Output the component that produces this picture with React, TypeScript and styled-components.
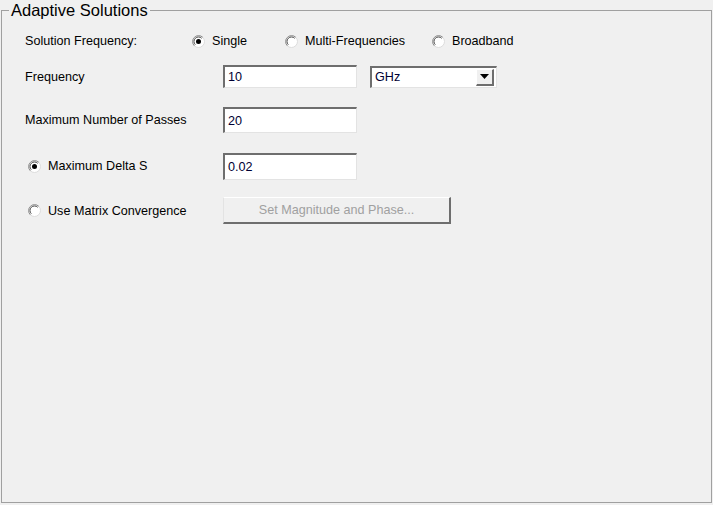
import React from "react";
import styled, { createGlobalStyle } from "styled-components";

const Global = createGlobalStyle`
  html, body { margin: 0; padding: 0; background: #f0f0f0; }
  body { font-family: "Liberation Sans", Arial, sans-serif; font-size: 12.6px; color: #000; }
`;

const Page = styled.div`
  width: 713px;
  height: 505px;
  padding-left: 1px;
  box-sizing: border-box;
`;

const Group = styled.fieldset`
  margin: 0;
  padding: 0;
  width: 711px;
  height: 503px;
  box-sizing: border-box;
  border: 1px solid #a0a0a0;
`;

const Legend = styled.legend`
  margin-left: 7px;
  padding: 0 2px;
  font-size: 16.5px;
  line-height: 20px;
  color: #000;
`;

const Content = styled.div`
  padding: 11px 0 0 23px;
  display: flex;
  flex-direction: column;
`;

const Row = styled.div<{ $top: number; $h: number }>`
  display: flex;
  align-items: center;
  margin-top: ${(p) => p.$top}px;
  height: ${(p) => p.$h}px;
`;

const Label = styled.div<{ $w?: number; $indent?: number }>`
  width: ${(p) => p.$w ?? 198}px;
  padding-left: ${(p) => p.$indent ?? 0}px;
  box-sizing: border-box;
  display: flex;
  align-items: center;
  gap: 7px;
  white-space: nowrap;
`;

const Option = styled.label<{ $w: number }>`
  width: ${(p) => p.$w}px;
  display: flex;
  align-items: center;
  gap: 7px;
  white-space: nowrap;
`;

const TextBox = styled.div<{ $w: number; $h: number }>`
  width: ${(p) => p.$w}px;
  height: ${(p) => p.$h}px;
  box-sizing: border-box;
  background: #fff;
  border-style: solid;
  border-width: 2px 1px 1px 2px;
  border-color: #6e6e6e #e3e3e3 #e3e3e3 #6e6e6e;
  padding: 0 3px;
  display: flex;
  align-items: center;
  color: #000033;
`;

const Select = styled(TextBox)`
  margin-left: 13px;
  padding-right: 2px;
  justify-content: space-between;
`;

const DropButton = styled.div`
  width: 18px;
  height: 17px;
  box-sizing: border-box;
  background: #f0f0f0;
  border-style: solid;
  border-width: 1px 2px 2px 1px;
  border-color: #ffffff #6e6e6e #6e6e6e #ffffff;
  display: flex;
  align-items: center;
  justify-content: center;
`;

const Button = styled.div`
  width: 228px;
  height: 27px;
  box-sizing: border-box;
  background: #f0f0f0;
  border-style: solid;
  border-width: 1px 2px 2px 1px;
  border-color: #ffffff #6e6e6e #6e6e6e #e3e3e3;
  display: flex;
  align-items: center;
  justify-content: center;
  color: #a0a0a0;
`;

const Radio = ({ checked }: { checked?: boolean }) => (
  <svg width="13" height="13" viewBox="0 0 13 13">
    <circle cx="6.5" cy="6.5" r="6" fill="#fff" stroke="#dcdcdc" strokeWidth="1" />
    <path d="M2.26 10.74 A6 6 0 0 1 10.74 2.26" fill="none" stroke="#8c8c8c" strokeWidth="1" />
    <path d="M3.3 9.7 A4.5 4.5 0 0 1 9.7 3.3" fill="none" stroke="#4a4a4a" strokeWidth="1" />
    {checked && <circle cx="6.5" cy="6.5" r="2.5" fill="#000" />}
  </svg>
);

export default function App() {
  return (
    <Page>
      <Global />
      <Group>
        <Legend>Adaptive Solutions</Legend>
        <Content>
          <Row $top={0} $h={20}>
            <Label $w={167}>Solution Frequency:</Label>
            <Option $w={93}>
              <Radio checked />
              Single
            </Option>
            <Option $w={147}>
              <Radio />
              Multi-Frequencies
            </Option>
            <Option $w={100}>
              <Radio />
              Broadband
            </Option>
          </Row>
          <Row $top={14} $h={23}>
            <Label>Frequency</Label>
            <TextBox $w={134} $h={23}>10</TextBox>
            <Select $w={127} $h={22}>
              GHz
              <DropButton>
                <svg width="9" height="5" viewBox="0 0 9 5">
                  <path d="M0 0 H9 L4.5 5 Z" fill="#000" />
                </svg>
              </DropButton>
            </Select>
          </Row>
          <Row $top={19} $h={26}>
            <Label>Maximum Number of Passes</Label>
            <TextBox $w={134} $h={26}>20</TextBox>
          </Row>
          <Row $top={20} $h={26}>
            <Label $indent={3}>
              <Radio checked />
              Maximum Delta S
            </Label>
            <TextBox $w={134} $h={27}>0.02</TextBox>
          </Row>
          <Row $top={18} $h={27}>
            <Label $indent={3}>
              <Radio />
              Use Matrix Convergence
            </Label>
            <Button>Set Magnitude and Phase...</Button>
          </Row>
        </Content>
      </Group>
    </Page>
  );
}
